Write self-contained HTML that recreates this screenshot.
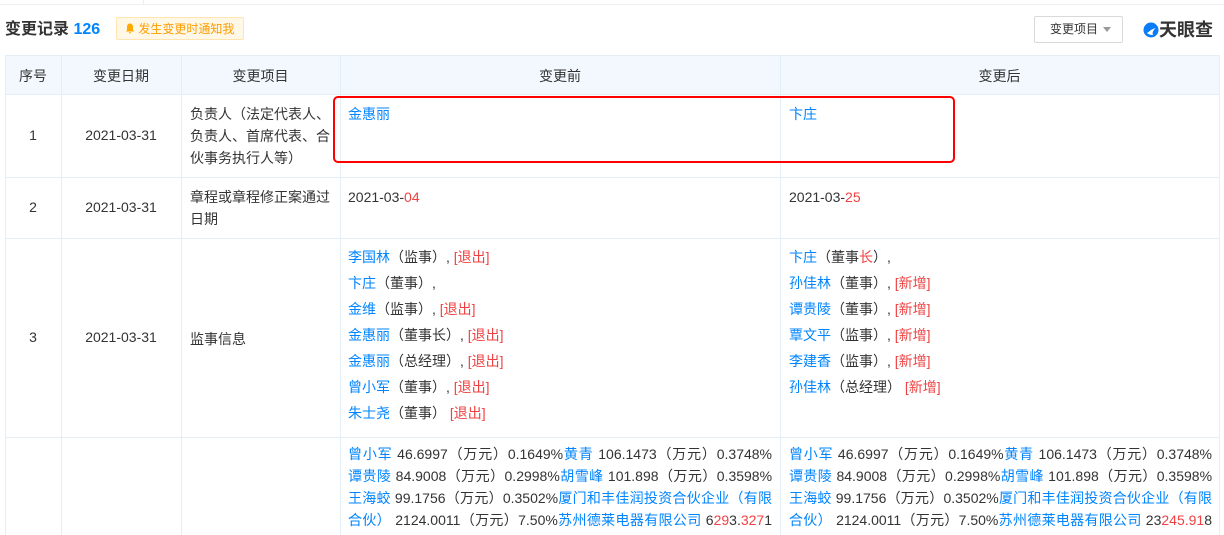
<!DOCTYPE html><html><head><meta charset="utf-8"><style>
body{margin:0;width:1224px;height:534px;overflow:hidden;background:#fff;font-family:"Liberation Sans","Noto Sans CJK SC",sans-serif;font-size:14px;color:#333;position:relative}
.a{position:absolute}
.b{color:#0084ff}.r{color:#f04142}
.v{position:absolute;top:55px;width:1px;height:480px;background:#e4eef6}
.h{position:absolute;left:5px;width:1214px;height:1px;background:#e4eef6}
.c{position:absolute;text-align:center}
.j div{text-align:justify;text-align-last:justify;white-space:nowrap;height:22px;line-height:22px}
.l div{height:26px;line-height:26px}
</style></head><body>
<div class="a" style="left:0;top:0;width:1224px;height:4px;border-bottom:1px solid #eee"></div>
<div class="a" style="left:143px;top:0;width:1px;height:4px;background:#eee"></div>
<div class="a" style="left:5px;top:18px;font-size:16px;font-weight:bold;color:#333;line-height:24px">变更记录 <span style="color:#0084ff">126</span></div>
<div class="a" style="left:116px;top:17px;width:128px;height:23px;background:#fff8e6;border:1px solid #ffe4b0;border-radius:2px;color:#ff9c00;font-size:12px;line-height:23px;box-sizing:border-box;padding-left:8px"><svg width="10" height="11" viewBox="0 0 10 11" style="vertical-align:-1px"><path d="M5 0.5C2.8 0.5 2 2.3 2 4v3L0.8 8.5h8.4L8 7V4C8 2.3 7.2 0.5 5 0.5zM3.8 9.3h2.4a1.2 1.2 0 0 1-2.4 0z" fill="#ffaa00"/></svg> 发生变更时通知我</div>
<div class="a" style="left:1034px;top:16px;width:89px;height:27px;border:1px solid #d9d9d9;border-radius:2px;box-sizing:border-box;font-size:12px;line-height:25px;padding-left:15px;color:#333">变更项目 <span style="display:inline-block;border:4px solid transparent;border-top:5px solid #999;vertical-align:-3px;margin-left:2px"></span></div>
<div class="a" style="left:1143px;top:19px;font-size:18px;font-weight:bold;color:#333;line-height:22px"><svg width="16" height="16" viewBox="0 0 16 16" style="vertical-align:-2px"><circle cx="8" cy="8" r="7.5" fill="#0a7cf5"/><path d="M4 11c2-1 4-4 9-5-3 2-4 5-3 7-3 0-5-1-6-2z" fill="#fff"/></svg>天眼查</div>
<div class="a" style="left:5px;top:55px;width:1214px;height:39px;background:#f2f8fe"></div>
<div class="h" style="top:55px"></div><div class="h" style="top:94px"></div><div class="h" style="top:177px"></div><div class="h" style="top:238px"></div><div class="h" style="top:437px"></div>
<div class="v" style="left:5px"></div><div class="v" style="left:61px"></div><div class="v" style="left:181px"></div><div class="v" style="left:340px"></div><div class="v" style="left:780px"></div><div class="v" style="left:1219px"></div>
<div class="c" style="left:5px;width:56px;top:66px">序号</div>
<div class="c" style="left:61px;width:120px;top:66px">变更日期</div>
<div class="c" style="left:181px;width:159px;top:66px">变更项目</div>
<div class="c" style="left:340px;width:440px;top:66px">变更前</div>
<div class="c" style="left:780px;width:439px;top:66px">变更后</div>
<div class="c" style="left:5px;width:56px;top:127px">1</div>
<div class="c" style="left:61px;width:120px;top:127px">2021-03-31</div>
<div class="a" style="left:190px;top:103px;width:145px;line-height:22px">负责人（法定代表人、负责人、首席代表、合伙事务执行人等）</div>
<div class="a b" style="left:348px;top:103px;line-height:22px">金惠丽</div>
<div class="a b" style="left:789px;top:103px;line-height:22px">卞庄</div>
<div class="a" style="left:333px;top:96px;width:622px;height:67px;border:2px solid #f00;border-radius:5px;box-sizing:border-box"></div>
<div class="c" style="left:5px;width:56px;top:199px">2</div>
<div class="c" style="left:61px;width:120px;top:199px">2021-03-31</div>
<div class="a" style="left:190px;top:186px;width:145px;line-height:22px">章程或章程修正案通过日期</div>
<div class="a" style="left:348px;top:186px;line-height:22px">2021-03-<span class="r">04</span></div>
<div class="a" style="left:789px;top:186px;line-height:22px">2021-03-<span class="r">25</span></div>
<div class="c" style="left:5px;width:56px;top:329px">3</div>
<div class="c" style="left:61px;width:120px;top:329px">2021-03-31</div>
<div class="a" style="left:190px;top:329px">监事信息</div>
<div class="a l" style="left:348px;top:244px">
<div><span class="b">李国林</span>（监事）, <span class="r">[退出]</span></div>
<div><span class="b">卞庄</span>（董事）,</div>
<div><span class="b">金维</span>（监事）, <span class="r">[退出]</span></div>
<div><span class="b">金惠丽</span>（董事长）, <span class="r">[退出]</span></div>
<div><span class="b">金惠丽</span>（总经理）, <span class="r">[退出]</span></div>
<div><span class="b">曾小军</span>（董事）, <span class="r">[退出]</span></div>
<div><span class="b">朱士尧</span>（董事） <span class="r">[退出]</span></div></div>
<div class="a l" style="left:789px;top:244px">
<div><span class="b">卞庄</span>（董事<span class="r">长</span>）,</div>
<div><span class="b">孙佳林</span>（董事）, <span class="r">[新增]</span></div>
<div><span class="b">谭贵陵</span>（董事）, <span class="r">[新增]</span></div>
<div><span class="b">覃文平</span>（监事）, <span class="r">[新增]</span></div>
<div><span class="b">李建香</span>（监事）, <span class="r">[新增]</span></div>
<div><span class="b">孙佳林</span>（总经理） <span class="r">[新增]</span></div></div>
<div class="a j" style="left:348px;top:443px;width:424px">
<div><span class="b">曾小军</span> 46.6997（万元）0.1649%<span class="b">黄青</span> 106.1473（万元）0.3748%</div>
<div><span class="b">谭贵陵</span> 84.9008（万元）0.2998%<span class="b">胡雪峰</span> 101.898（万元）0.3598%</div>
<div><span class="b">王海蛟</span> 99.1756（万元）0.3502%<span class="b">厦门和丰佳润投资合伙企业（有限</span></div>
<div><span class="b">合伙）</span> 2124.0011（万元）7.50%<span class="b">苏州德莱电器有限公司</span> 6<span class="r">29</span>3.<span class="r">327</span>1</div></div>
<div class="a j" style="left:789px;top:443px;width:423px">
<div><span class="b">曾小军</span> 46.6997（万元）0.1649%<span class="b">黄青</span> 106.1473（万元）0.3748%</div>
<div><span class="b">谭贵陵</span> 84.9008（万元）0.2998%<span class="b">胡雪峰</span> 101.898（万元）0.3598%</div>
<div><span class="b">王海蛟</span> 99.1756（万元）0.3502%<span class="b">厦门和丰佳润投资合伙企业（有限</span></div>
<div><span class="b">合伙）</span> 2124.0011（万元）7.50%<span class="b">苏州德莱电器有限公司</span> 23<span class="r">245.91</span>8</div></div>
</body></html>
